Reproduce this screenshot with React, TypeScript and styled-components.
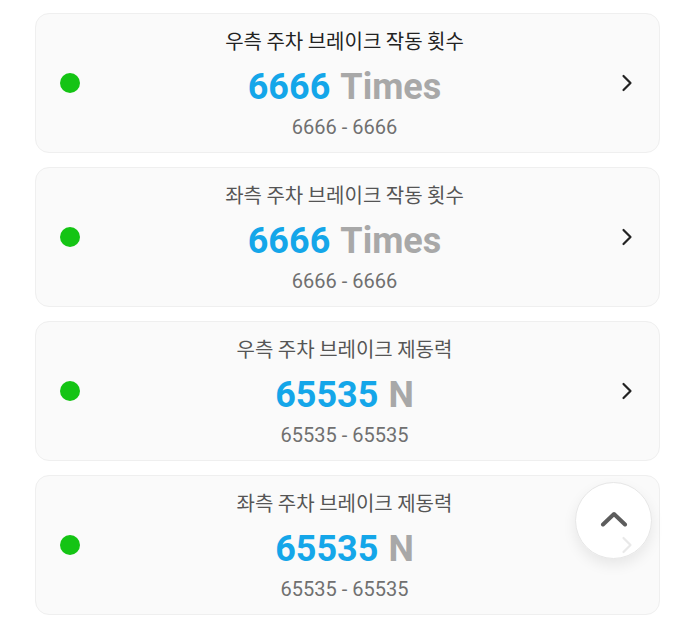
import React from 'react';
import styled, { createGlobalStyle } from 'styled-components';

const GlobalStyle = createGlobalStyle`
  body {
    margin: 0;
    background: #ffffff;
    font-family: Roboto, "Noto Sans CJK KR", sans-serif;
  }
`;

type Item = {
  title: string;
  value: string;
  unit: string;
  range: string;
  dark?: boolean;
};

const items: Item[] = [
  { title: '우측 주차 브레이크 작동 횟수', value: '6666', unit: 'Times', range: '6666 - 6666', dark: true },
  { title: '좌측 주차 브레이크 작동 횟수', value: '6666', unit: 'Times', range: '6666 - 6666' },
  { title: '우측 주차 브레이크 제동력', value: '65535', unit: 'N', range: '65535 - 65535' },
  { title: '좌측 주차 브레이크 제동력', value: '65535', unit: 'N', range: '65535 - 65535' },
];

const ChevronRight = () => (
  <svg width="12" height="18" viewBox="0 0 12 18" fill="none">
    <path d="M2.5 2 L9.5 9 L2.5 16" stroke="#222" strokeWidth="2.2" strokeLinecap="round" strokeLinejoin="round" />
  </svg>
);

const ChevronUp = () => (
  <svg width="28" height="16" viewBox="0 0 28 16" fill="none">
    <path d="M3 13.5 L14 3 L25 13.5" stroke="#5c5c5c" strokeWidth="4" strokeLinecap="round" strokeLinejoin="round" />
  </svg>
);

const App = () => {
  return (
    <>
      <GlobalStyle />
      <Page>
        <List>
          {items.map((item) => (
            <Card key={item.title}>
              <Dot />
              <Center>
                <Title $dark={item.dark}>{item.title}</Title>
                <ValueRow>
                  <Value>{item.value}</Value>
                  <Unit>{item.unit}</Unit>
                </ValueRow>
                <Range>{item.range}</Range>
              </Center>
              <Arrow>
                <ChevronRight />
              </Arrow>
            </Card>
          ))}
        </List>
        <TopButton type="button">
          <ChevronUp />
        </TopButton>
      </Page>
    </>
  );
};

const Page = styled.div`
  position: relative;
  width: 695px;
  height: 626px;
  overflow: hidden;
`;

const List = styled.div`
  display: flex;
  flex-direction: column;
  gap: 14px;
  padding: 13px 0 0 35px;
  width: 625px;
`;

const Card = styled.div`
  box-sizing: border-box;
  height: 140px;
  display: grid;
  grid-template-columns: 1fr auto 1fr;
  align-items: center;
  padding: 0 24px;
  background: #fafafa;
  border: 1px solid #efefef;
  border-radius: 14px;
`;

const Dot = styled.div`
  width: 20px;
  height: 20px;
  border-radius: 50%;
  background: #14c414;
`;

const Center = styled.div`
  display: flex;
  flex-direction: column;
  align-items: center;
  margin-left: -6px;
`;

const Title = styled.div<{ $dark?: boolean }>`
  font-family: "Noto Sans CJK KR", sans-serif;
  font-size: 20px;
  line-height: 26px;
  color: ${({ $dark }) => ($dark ? '#222222' : '#555555')};
`;

const ValueRow = styled.div`
  display: flex;
  gap: 10px;
  margin-top: 13px;
  font-family: Roboto, sans-serif;
  font-weight: 700;
  font-size: 36px;
  line-height: 40px;
`;

const Value = styled.span`
  color: #14a6e9;
`;

const Unit = styled.span`
  color: #a8a8a8;
`;

const Range = styled.div`
  margin-top: 8px;
  font-family: Roboto, sans-serif;
  font-size: 20px;
  line-height: 24px;
  color: #707070;
`;

const Arrow = styled.div`
  justify-self: end;
  display: flex;
  align-items: center;
  margin-right: 2px;
`;

const TopButton = styled.button`
  position: absolute;
  left: 575px;
  top: 482px;
  width: 77px;
  height: 77px;
  border-radius: 50%;
  border: 1px solid #e6e6e6;
  background: rgba(255, 255, 255, 0.9);
  box-shadow: 0 6px 14px rgba(0, 0, 0, 0.08);
  display: flex;
  align-items: center;
  justify-content: center;
  padding: 0 0 4px;
  cursor: pointer;
`;

export default App;
